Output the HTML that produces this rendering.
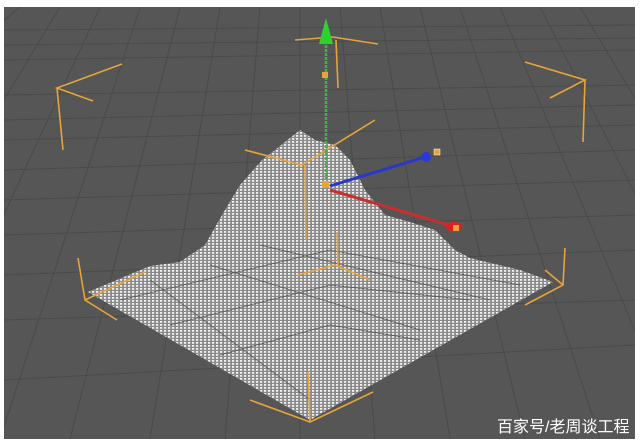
<!DOCTYPE html>
<html><head><meta charset="utf-8"><style>
html,body{margin:0;padding:0;background:#fff;width:640px;height:445px;overflow:hidden}
svg{display:block}
.t{position:absolute;left:497px;top:413px;font:16px "Liberation Sans","Noto Sans CJK SC",sans-serif;color:#fff}
</style></head><body>
<svg width="640" height="445" viewBox="0 0 640 445">
<defs>
<pattern id="d" width="4" height="3" patternUnits="userSpaceOnUse">
<rect width="4" height="3" fill="#8a8a8a"/>
<rect width="2.2" height="1.8" fill="#f0f0f0"/>
</pattern>
<clipPath id="c"><rect x="4" y="7" width="631" height="432"/></clipPath>
</defs>
<rect x="0" y="0" width="640" height="445" fill="#fff"/>
<rect x="4" y="7" width="631" height="432" fill="#565656"/>
<g clip-path="url(#c)">
<g stroke="#4a4a4a" stroke-width="1" fill="none">
<path d="M4 60 L635 50 M4 95 L635 85 M4 140 L635 125 M4 200 L635 180 M4 275 L635 250 M4 380 L635 345"/>
<path d="M4 30 L635 25 M4 45 L635 38 M4 120 L635 105 M4 170 L635 150 M4 235 L635 215 M4 320 L635 300"/>
<path d="M60 7 L-200 439 M140 7 L0 439 M220 7 L150 439 M300 7 L300 439 M380 7 L450 439 M460 7 L600 439 M540 7 L760 439"/>
<path d="M20 7 L-500 439 M100 7 L-100 439 M180 7 L70 439 M260 7 L225 439 M340 7 L375 439 M420 7 L525 439 M500 7 L680 439 M580 7 L840 439"/>
</g>
<polygon fill="url(#d)" points="88,292 150,266 180,262 205,245 222,215 240,185 262,160 275,150 300,130 315,140 335,145 350,160 365,190 385,215 410,222 435,230 455,250 470,258 520,270 553,282 310,420"/>
<g stroke="#3c3c3c" stroke-width="1" opacity=".6" fill="none">
<path d="M120 300 L330 250 L520 285 M170 325 L330 285 L470 300 M220 355 L330 325 L420 340 M150 280 L310 400 M210 265 L420 330 M260 245 L490 300"/>
</g>
<g stroke="#e6a43a" stroke-width="1.6" fill="none">
<path d="M122 64 L57 88 L93 101 M57 88 L63 150"/>
<path d="M525 62 L585 80 L550 98 M585 80 L583 142"/>
<path d="M295 40 L333 37 L378 44 M336 40 L338 88"/>
<path d="M245 150 L302 165 L375 120 M305 165 L306 240"/>
<path d="M78 258 L85 300 L117 320 M85 300 L145 272"/>
<path d="M565 248 L563 285 L525 305 M563 285 L545 270"/>
<path d="M250 400 L310 422 L373 392 M308 372 L310 422"/>
<path d="M298 275 L335 265 L370 280 M337 232 L338 265"/>
</g>
<g fill="none">
<path d="M326 188 L326 42" stroke="#2fbf2f" stroke-width="2.5" stroke-dasharray="3 1"/>
<path d="M330 186 L425 157" stroke="#2a38c8" stroke-width="3"/>
<path d="M330 190 L452 226" stroke="#c83030" stroke-width="3"/>
</g>
<polygon points="326,18 319,44 333,44" fill="#2ed12e"/>
<circle cx="426" cy="157" r="5" fill="#2a3ad8"/>
<ellipse cx="454" cy="227" rx="8" ry="5" fill="#e02020"/>
<rect x="322" y="72" width="6" height="6" fill="#e6a43a"/>
<rect x="434" y="149" width="6" height="6" fill="#e6a43a" stroke="#fff" stroke-width=".5"/>
<rect x="453" y="225" width="6" height="6" fill="#e6a43a"/>
<rect x="322" y="181" width="7" height="7" fill="#e6a43a"/>
</g>
</svg>
<div class="t">百家号/老周谈工程</div>
</body></html>
